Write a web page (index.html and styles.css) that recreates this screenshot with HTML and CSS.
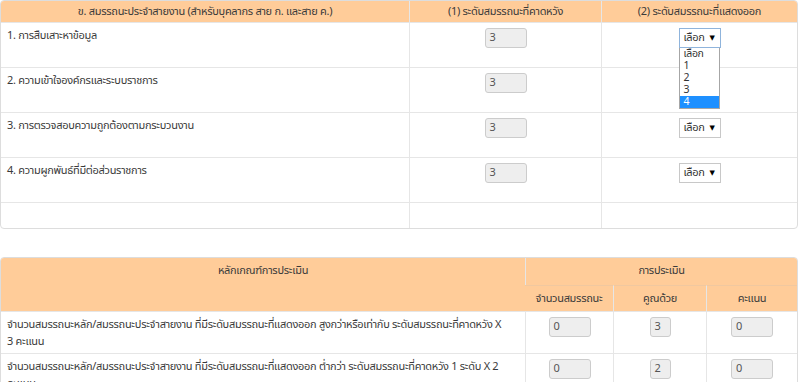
FILE: index.html
```html
<!DOCTYPE html>
<html lang="th">
<head>
<meta charset="utf-8">
<title>สมรรถนะ</title>
<link rel="stylesheet" href="styles.css">
</head>
<body>
<div class="page">
  <table class="grid t1">
    <colgroup><col class="c1a"><col class="c1b"><col class="c1c"></colgroup>
    <thead>
      <tr>
        <th>ข. สมรรถนะประจำสายงาน (สำหรับบุคลากร สาย ก. และสาย ค.)</th>
        <th>(1) ระดับสมรรถนะที่คาดหวัง</th>
        <th>(2) ระดับสมรรถนะที่แสดงออก</th>
      </tr>
    </thead>
    <tbody>
      <tr class="row">
        <td>1. การสืบเสาะหาข้อมูล</td>
        <td class="center"><span class="box">3</span></td>
        <td class="center">
          <div class="selwrap">
            <div class="sel focus">เลือก<span class="arrow">▼</span></div>
            <ul class="menu">
              <li>เลือก</li>
              <li>1</li>
              <li>2</li>
              <li>3</li>
              <li class="hl">4</li>
            </ul>
          </div>
        </td>
      </tr>
      <tr class="row">
        <td>2. ความเข้าใจองค์กรและระบบราชการ</td>
        <td class="center"><span class="box">3</span></td>
        <td class="center"></td>
      </tr>
      <tr class="row">
        <td>3. การตรวจสอบความถูกต้องตามกระบวนงาน</td>
        <td class="center"><span class="box">3</span></td>
        <td class="center"><div class="selwrap"><div class="sel">เลือก<span class="arrow">▼</span></div></div></td>
      </tr>
      <tr class="row">
        <td>4. ความผูกพันธ์ที่มีต่อส่วนราชการ</td>
        <td class="center"><span class="box">3</span></td>
        <td class="center"><div class="selwrap"><div class="sel">เลือก<span class="arrow">▼</span></div></div></td>
      </tr>
      <tr class="empty"><td></td><td></td><td></td></tr>
    </tbody>
  </table>

  <table class="grid t2">
    <colgroup><col class="c2a"><col class="c2b"><col class="c2c"><col class="c2d"></colgroup>
    <thead>
      <tr>
        <th rowspan="2" class="crit">หลักเกณฑ์การประเมิน</th>
        <th colspan="3" class="h1">การประเมิน</th>
      </tr>
      <tr>
        <th class="h2">จำนวนสมรรถนะ</th>
        <th class="h2">คูณด้วย</th>
        <th class="h2">คะแนน</th>
      </tr>
    </thead>
    <tbody>
      <tr class="row2">
        <td class="desc">จำนวนสมรรถนะหลัก/สมรรถนะประจำสายงาน ที่มีระดับสมรรถนะที่แสดงออก สูงกว่าหรือเท่ากับ ระดับสมรรถนะที่คาดหวัง X 3 คะแนน</td>
        <td class="center"><span class="box">0</span></td>
        <td class="center"><span class="box small">3</span></td>
        <td class="center"><span class="box">0</span></td>
      </tr>
      <tr class="row2">
        <td class="desc">จำนวนสมรรถนะหลัก/สมรรถนะประจำสายงาน ที่มีระดับสมรรถนะที่แสดงออก ต่ำกว่า ระดับสมรรถนะที่คาดหวัง 1 ระดับ X 2 คะแนน</td>
        <td class="center"><span class="box">0</span></td>
        <td class="center"><span class="box small">2</span></td>
        <td class="center"><span class="box">0</span></td>
      </tr>
    </tbody>
  </table>
</div>
</body>
</html>
```

FILE: styles.css
```css
html, body {
  margin: 0;
  padding: 0;
  background: #fff;
}
body {
  font-family: Tahoma, "Noto Sans Thai", Loma, Garuda, "DejaVu Sans", sans-serif;
  font-size: 11px;
  letter-spacing: -0.3px;
  color: #3a3a3a;
}
.page {
  width: 798px;
}
.grid {
  width: 798px;
  border-collapse: separate;
  border-spacing: 0;
  table-layout: fixed;
  border: 1px solid #ddd;
  border-radius: 4px;
}
.grid th {
  background: #ffcc99;
  font-weight: normal;
  color: #3a3a3a;
  text-align: center;
  vertical-align: top;
}
.grid td {
  vertical-align: top;
  border-top: 1px solid #e6e6e6;
}
.grid th + th, .grid td + td {
  border-left: 1px solid #e6e6e6;
}
.t1 th {
  height: 21px;
  padding: 2px 6px 0;
  box-sizing: border-box;
  line-height: 17px;
}
.t1 thead tr th:first-child { border-top-left-radius: 3px; }
.t1 thead tr th:last-child { border-top-right-radius: 3px; }
.c1a { width: 408px; }
.c1b { width: 192px; }
.c1c { width: auto; }
.t1 .row td {
  height: 45px;
  box-sizing: border-box;
  padding: 4px 6px 0;
  line-height: 17px;
}
.t1 .row td.center {
  padding-top: 5px;
}
.t1 .empty td {
  height: 26px;
  box-sizing: border-box;
}
.center { text-align: center; }
.box {
  display: inline-block;
  box-sizing: border-box;
  width: 42px;
  height: 20px;
  line-height: 18px;
  padding: 0 4px;
  text-align: left;
  background: #eee;
  border: 1px solid #ccc;
  border-radius: 3px;
  color: #555;
  vertical-align: top;
  letter-spacing: 0;
}
.box.small {
  width: 21px;
}
.selwrap {
  position: relative;
  display: inline-block;
  width: 42px;
  vertical-align: top;
}
.sel {
  box-sizing: border-box;
  width: 42px;
  height: 20px;
  line-height: 18px;
  border: 1px solid #c8c8c8;
  background: #fff;
  padding: 0 0 0 4px;
  text-align: left;
  color: #333;
  position: relative;
  font-size: 11px;
}
.sel.focus {
  border-color: #8fb4dc;
}
.arrow {
  position: absolute;
  right: 5px;
  top: 0;
  font-size: 7px;
  color: #000;
}
.menu {
  position: absolute;
  left: 0;
  top: 20px;
  width: 41px;
  margin: 0;
  padding: 0;
  list-style: none;
  border: 1px solid #a6a6a6;
  border-top: none;
  background: #fff;
  text-align: left;
  z-index: 2;
  box-sizing: border-box;
}
.menu li {
  height: 12px;
  line-height: 12px;
  padding-left: 4px;
  font-size: 10.5px;
  color: #333;
  overflow: hidden;
}
.menu li.hl {
  background: #1e90ff;
  color: #fff;
}
.t2 {
  margin-top: 28px;
}
.c2a { width: 524px; }
.c2b { width: 88px; }
.c2c { width: 93px; }
.c2d { width: auto; }
.t2 th {
  padding: 4px 4px 0;
  box-sizing: border-box;
  line-height: 17px;
}
.t2 .h1 { height: 27px; }
.t2 .h2 {
  height: 26px;
  border-top: 1px solid #f0c8a0;
  white-space: nowrap;
}
.t2 .crit { border-top-left-radius: 3px; }
.t2 .h1 { border-top-right-radius: 3px; }
.t2 .row2 td {
  height: 42px;
  box-sizing: border-box;
  padding: 4px 6px 0;
  line-height: 17px;
}
.t2 .row2 td.desc {
  padding-right: 21px;
}
.t2 .row2 td.center {
  padding-top: 5px;
}
```
